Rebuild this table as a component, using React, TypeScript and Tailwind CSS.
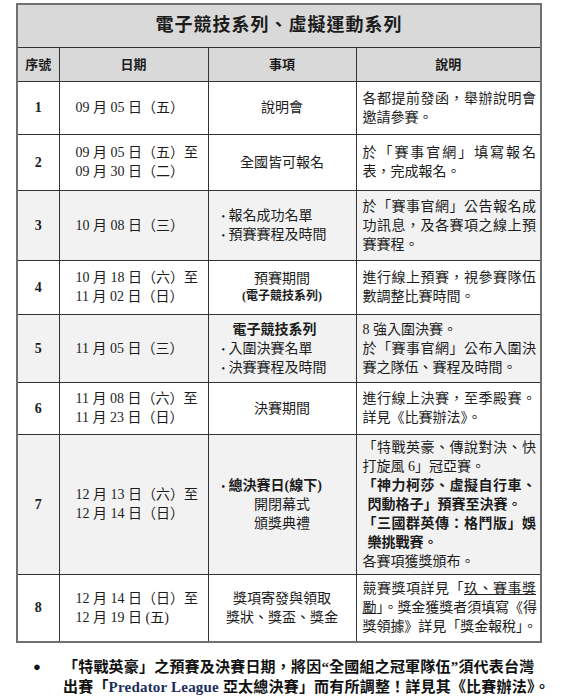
const J = 'block [text-align-last:justify]';

function Bul({ children, bold }: { children: React.ReactNode; bold?: boolean }) {
  return (
    <div className={`flex items-baseline ${bold ? 'font-bold' : ''}`}>
      <span className="w-[7px] text-[10px] leading-none">•</span>
      <span>{children}</span>
    </div>
  );
}

export default function App() {
  const td = 'border border-[#333] align-middle p-0';
  return (
    <div className="min-h-screen bg-white text-[#1c1c1c] font-['Liberation_Serif','Noto_Sans_CJK_TC',serif] pt-[3px] pl-[16px]">
      <table className="w-[524px] table-fixed border-collapse border-2 border-[#707070] text-[14px] leading-[19px]">
        <colgroup>
          <col className="w-[42px]" />
          <col className="w-[149px]" />
          <col className="w-[148px]" />
          <col className="w-[185px]" />
        </colgroup>
        <thead>
          <tr className="h-[43px] bg-[#d9d9d9]">
            <td colSpan={4} className={`${td} text-center text-[18px] font-bold tracking-[1px]`}>
              電子競技系列、虛擬運動系列
            </td>
          </tr>
          <tr className="h-[34px] bg-[#d9d9d9] text-[13px] font-bold">
            <td className={`${td} text-center`}>序號</td>
            <td className={`${td} text-center`}>日期</td>
            <td className={`${td} text-center`}>事項</td>
            <td className={`${td} text-center`}>說明</td>
          </tr>
        </thead>
        <tbody>
          {/* 1 */}
          <tr className="h-[53px]">
            <td className={`${td} text-center font-bold`}>1</td>
            <td className={`${td} pl-[16px]`}>09 月 05 日（五）</td>
            <td className={`${td} text-center`}>說明會</td>
            <td className={`${td} pl-[6px] pr-[4px]`}>
              <span className={J}>各都提前發函，舉辦說明會</span>
              <span className="block">邀請參賽。</span>
            </td>
          </tr>
          {/* 2 */}
          <tr className="h-[56px]">
            <td className={`${td} text-center font-bold`}>2</td>
            <td className={`${td} pl-[16px]`}>
              <div>09 月 05 日（五）至</div>
              <div>09 月 30 日（二）</div>
            </td>
            <td className={`${td} text-center`}>全國皆可報名</td>
            <td className={`${td} pl-[6px] pr-[4px]`}>
              <span className={J}>於「賽事官網」填寫報名</span>
              <span className="block">表，完成報名。</span>
            </td>
          </tr>
          {/* 3 */}
          <tr className="h-[70px] bg-[#f2f2f2]">
            <td className={`${td} text-center font-bold`}>3</td>
            <td className={`${td} pl-[16px]`}>10 月 08 日（三）</td>
            <td className={`${td} pl-[13px]`}>
              <Bul>報名成功名單</Bul>
              <Bul>預賽賽程及時間</Bul>
            </td>
            <td className={`${td} pl-[6px] pr-[4px]`}>
              <span className={J}>於「賽事官網」公告報名成</span>
              <span className={J}>功訊息，及各賽項之線上預</span>
              <span className="block">賽賽程。</span>
            </td>
          </tr>
          {/* 4 */}
          <tr className="h-[54px]">
            <td className={`${td} text-center font-bold`}>4</td>
            <td className={`${td} pl-[16px]`}>
              <div>10 月 18 日（六）至</div>
              <div>11 月 02 日（日）</div>
            </td>
            <td className={`${td} text-center`}>
              <div>預賽期間</div>
              <div className="text-[12px] font-bold leading-[17px]">(電子競技系列)</div>
            </td>
            <td className={`${td} pl-[6px] pr-[4px]`}>
              <span className={J}>進行線上預賽，視參賽隊伍</span>
              <span className="block">數調整比賽時間。</span>
            </td>
          </tr>
          {/* 5 */}
          <tr className="h-[68px] bg-[#f2f2f2]">
            <td className={`${td} text-center font-bold`}>5</td>
            <td className={`${td} pl-[16px]`}>11 月 05 日（三）</td>
            <td className={`${td} pl-[13px]`}>
              <div className="w-[106px] text-center font-bold">電子競技系列</div>
              <Bul>入圍決賽名單</Bul>
              <Bul>決賽賽程及時間</Bul>
            </td>
            <td className={`${td} pl-[6px] pr-[4px]`}>
              <span className="block">8 強入圍決賽。</span>
              <span className={J}>於「賽事官網」公布入圍決</span>
              <span className="block">賽之隊伍、賽程及時間。</span>
            </td>
          </tr>
          {/* 6 */}
          <tr className="h-[52px]">
            <td className={`${td} text-center font-bold`}>6</td>
            <td className={`${td} pl-[16px]`}>
              <div>11 月 08 日（六）至</div>
              <div>11 月 23 日（日）</div>
            </td>
            <td className={`${td} text-center`}>決賽期間</td>
            <td className={`${td} pl-[6px] pr-[4px]`}>
              <span className={J}>進行線上決賽，至季殿賽。</span>
              <span className="block">詳見《比賽辦法》。</span>
            </td>
          </tr>
          {/* 7 */}
          <tr className="h-[140px] bg-[#f2f2f2]">
            <td className={`${td} text-center font-bold`}>7</td>
            <td className={`${td} pl-[16px]`}>
              <div>12 月 13 日（六）至</div>
              <div>12 月 14 日（日）</div>
            </td>
            <td className={`${td}`}>
              <div className="pl-[13px]">
                <Bul bold>總決賽日(線下)</Bul>
              </div>
              <div className="text-center">開閉幕式</div>
              <div className="text-center">頒獎典禮</div>
            </td>
            <td className={`${td} pl-[6px] pr-[4px]`}>
              <span className={J}>「特戰英豪、傳說對決、快</span>
              <span className="block">打旋風 6」冠亞賽。</span>
              <span className={`${J} font-bold`}>「神力柯莎、虛擬自行車、</span>
              <span className="block pl-[5px] font-bold">閃動格子」預賽至決賽。</span>
              <span className={`${J} font-bold`}>「三國群英傳：格鬥版」娛</span>
              <span className="block pl-[5px] font-bold">樂挑戰賽。</span>
              <span className="block">各賽項獲獎頒布。</span>
            </td>
          </tr>
          {/* 8 */}
          <tr className="h-[68px]">
            <td className={`${td} text-center font-bold`}>8</td>
            <td className={`${td} pl-[16px]`}>
              <div>12 月 14 日（日）至</div>
              <div>12 月 19 日 (五)</div>
            </td>
            <td className={`${td} text-center`}>
              <div>獎項寄發與領取</div>
              <div>獎狀、獎盃、獎金</div>
            </td>
            <td className={`${td} pl-[6px] pr-[4px]`}>
              <span className={J}>
                競賽獎項詳見「<span className="underline">玖、賽事獎</span>
              </span>
              <span className={`${J} tracking-[-1px]`}>
                <span className="underline">勵</span>」。獎金獲獎者須填寫《得
              </span>
              <span className={`${J} tracking-[-1px]`}>獎領據》詳見「獎金報稅」。</span>
            </td>
          </tr>
        </tbody>
      </table>

      <div className="mt-[14px] flex text-[15px] font-bold leading-[20px] text-[#111]">
        <span className="w-[47px] pl-[17px] text-[13px]">●</span>
        <div className="whitespace-nowrap tracking-[0.2px]">
          <div>「特戰英豪」之預賽及決賽日期，將因“全國組之冠軍隊伍”須代表台灣</div>
          <div>
            出賽「<span className="text-[#1c2e5c]">Predator League</span> 亞太總決賽」而有所調整！詳見其《比賽辦法》。
          </div>
        </div>
      </div>
    </div>
  );
}
